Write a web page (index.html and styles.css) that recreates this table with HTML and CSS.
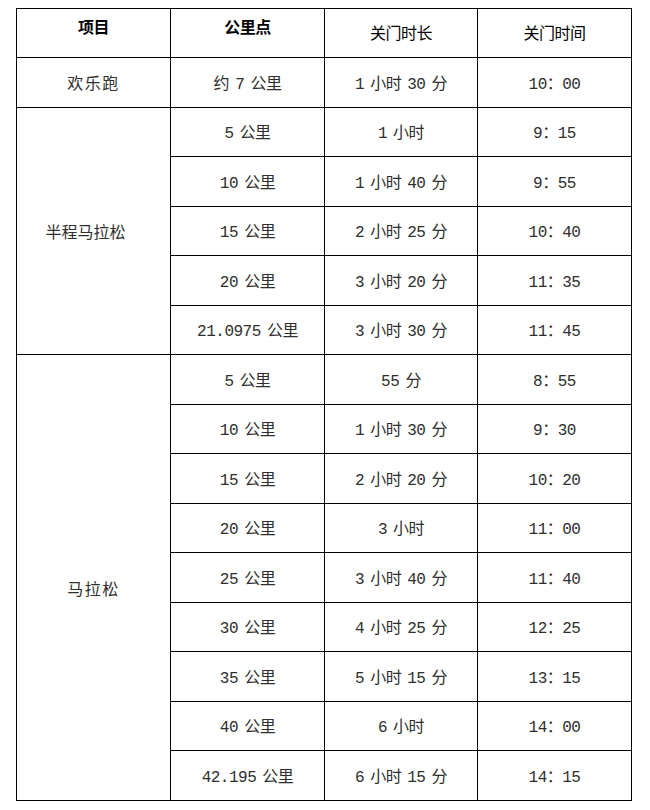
FILE: index.html
```html
<!DOCTYPE html>
<html lang="zh">
<head>
<meta charset="utf-8">
<title>关门时间</title>
<link rel="stylesheet" href="styles.css">
</head>
<body>
<table class="schedule">
  <colgroup>
    <col class="c1"><col class="c2"><col class="c3"><col class="c4">
  </colgroup>
  <thead>
    <tr class="h49">
      <th class="th-bold">项目</th>
      <th class="th-bold">公里点</th>
      <th class="th-plain">关门时长</th>
      <th class="th-plain">关门时间</th>
    </tr>
  </thead>
  <tbody>
    <tr class="h50">
      <td class="wide">欢乐跑</td>
      <td>约 7 公里</td>
      <td>1 小时 30 分</td>
      <td>10：00</td>
    </tr>
    <tr class="h49">
      <td rowspan="5" class="half">半程马拉松</td>
      <td>5 公里</td>
      <td>1 小时</td>
      <td>9：15</td>
    </tr>
    <tr class="h50">
      <td>10 公里</td>
      <td>1 小时 40 分</td>
      <td>9：55</td>
    </tr>
    <tr class="h49">
      <td>15 公里</td>
      <td>2 小时 25 分</td>
      <td>10：40</td>
    </tr>
    <tr class="h50">
      <td>20 公里</td>
      <td>3 小时 20 分</td>
      <td>11：35</td>
    </tr>
    <tr class="h49">
      <td>21.0975 公里</td>
      <td>3 小时 30 分</td>
      <td>11：45</td>
    </tr>
    <tr class="h50">
      <td rowspan="9" class="wide full">马拉松</td>
      <td>5 公里</td>
      <td>55 分</td>
      <td>8：55</td>
    </tr>
    <tr class="h49">
      <td>10 公里</td>
      <td>1 小时 30 分</td>
      <td>9：30</td>
    </tr>
    <tr class="h50">
      <td>15 公里</td>
      <td>2 小时 20 分</td>
      <td>10：20</td>
    </tr>
    <tr class="h49">
      <td>20 公里</td>
      <td>3 小时</td>
      <td>11：00</td>
    </tr>
    <tr class="h50">
      <td>25 公里</td>
      <td>3 小时 40 分</td>
      <td>11：40</td>
    </tr>
    <tr class="h49">
      <td>30 公里</td>
      <td>4 小时 25 分</td>
      <td>12：25</td>
    </tr>
    <tr class="h50">
      <td>35 公里</td>
      <td>5 小时 15 分</td>
      <td>13：15</td>
    </tr>
    <tr class="h49">
      <td>40 公里</td>
      <td>6 小时</td>
      <td>14：00</td>
    </tr>
    <tr class="h50">
      <td>42.195 公里</td>
      <td>6 小时 15 分</td>
      <td>14：15</td>
    </tr>
  </tbody>
</table>
</body>
</html>
```

FILE: styles.css
```css
html, body {
  background: #ffffff;
}
body {
  margin: 8px;
}
.schedule {
  margin-left: 8px;
  border-collapse: collapse;
  table-layout: fixed;
  width: 616px;
  font-family: "Liberation Mono", "Noto Sans CJK SC", monospace;
  font-size: 16px;
  letter-spacing: -0.5px;
  word-spacing: -3px;
  color: #2e2e2e;
}
.c1 { width: 154px; }
.c2 { width: 154px; }
.c3 { width: 153px; }
.c4 { width: 154px; }
.schedule th,
.schedule td {
  border: 1px solid #000;
  padding: 4px 0 0 0;
  text-align: center;
  vertical-align: middle;
  line-height: 20px;
}
.h49 { height: 49px; }
.h50 { height: 50px; }
.schedule .th-bold {
  font-weight: 700;
  color: #000;
  padding: 0 0 8px 0;
}
.schedule .th-plain {
  font-weight: 400;
  color: #000;
  padding: 4px 0 0 0;
}
.wide {
  letter-spacing: 1.5px;
}
.schedule .half {
  padding: 5px 16px 0 0;
  letter-spacing: 0;
}
.schedule .full {
  padding-top: 26px;
}
```
